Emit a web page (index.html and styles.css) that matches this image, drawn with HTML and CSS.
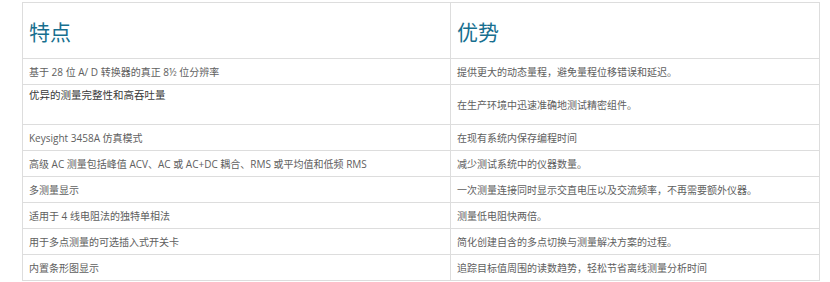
FILE: index.html
```html
<!DOCTYPE html>
<html lang="zh-CN">
<head>
<meta charset="utf-8">
<title>特点与优势</title>
<link rel="stylesheet" href="styles.css">
</head>
<body>
<div class="page">
<table class="features">
  <colgroup><col class="col-a"><col class="col-b"></colgroup>
  <thead>
    <tr><th>特点</th><th>优势</th></tr>
  </thead>
  <tbody>
    <tr><td>基于 28 位 A/ D 转换器的真正 8½ 位分辨率</td><td>提供更大的动态量程，避免量程位移错误和延迟。</td></tr>
    <tr class="tall"><td class="strong">优异的测量完整性和高吞吐量</td><td>在生产环境中迅速准确地测试精密组件。</td></tr>
    <tr><td>Keysight 3458A 仿真模式</td><td>在现有系统内保存编程时间</td></tr>
    <tr><td>高级 AC 测量包括峰值 ACV、AC 或 AC+DC 耦合、RMS 或平均值和低频 RMS</td><td>减少测试系统中的仪器数量。</td></tr>
    <tr><td>多测量显示</td><td>一次测量连接同时显示交直电压以及交流频率，不再需要额外仪器。</td></tr>
    <tr><td>适用于 4 线电阻法的独特单相法</td><td>测量低电阻快两倍。</td></tr>
    <tr><td>用于多点测量的可选插入式开关卡</td><td>简化创建自含的多点切换与测量解决方案的过程。</td></tr>
    <tr><td>内置条形图显示</td><td>追踪目标值周围的读数趋势，轻松节省离线测量分析时间</td></tr>
  </tbody>
</table>
</div>
</body>
</html>
```

FILE: styles.css
```css
html, body {
  margin: 0;
  padding: 0;
  background: #ffffff;
}
.page {
  padding: 2px 0 0 22px;
}
.features {
  border-collapse: collapse;
  width: 798px;
  table-layout: fixed;
  font-family: "Open Sans", "Noto Sans CJK SC", sans-serif;
}
.col-a { width: 428px; }
.features th,
.features td {
  border: 1px solid #dddddd;
  text-align: left;
  padding: 0 6px;
  vertical-align: middle;
}
.features th {
  height: 55px;
  font-family: "Noto Sans CJK SC", sans-serif;
  font-weight: 400;
  font-size: 21px;
  color: #176f8f;
  line-height: 24px;
}
.features td {
  height: 25px;
  font-size: 10px;
  line-height: 14px;
  color: #606060;
  white-space: nowrap;
}
.features tr.tall td {
  height: 36px;
}
.features td.strong {
  vertical-align: top;
  padding-top: 3px;
  font-size: 10.5px;
  color: #383838;
}
```
